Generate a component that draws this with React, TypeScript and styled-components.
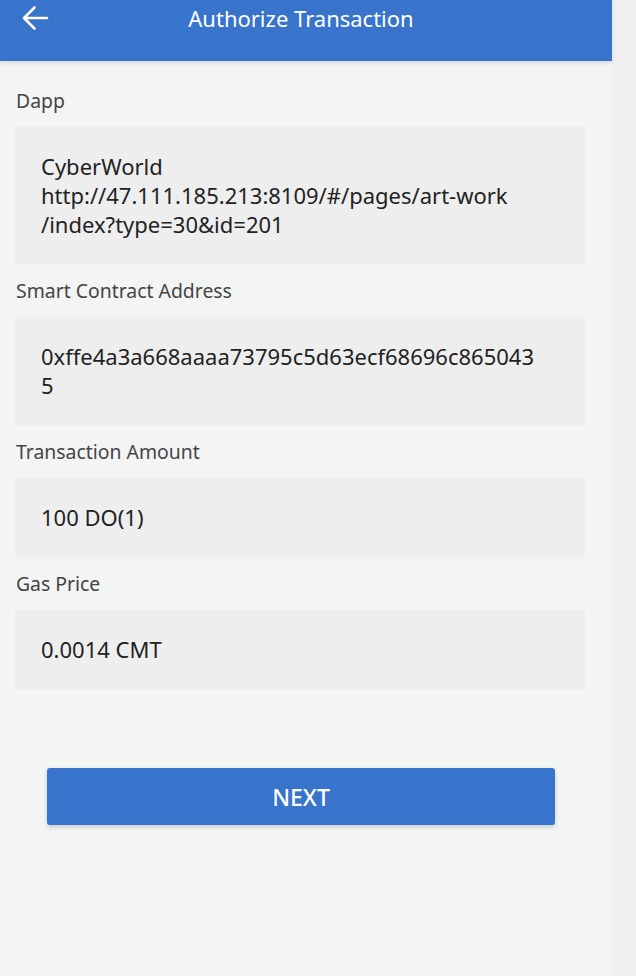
import React from "react";
import styled, { createGlobalStyle } from "styled-components";

const GlobalStyle = createGlobalStyle`
  html, body {
    margin: 0;
    padding: 0;
    background: #efefef;
  }
  * { box-sizing: border-box; }
`;

const Page = styled.div`
  width: 612px;
  min-height: 976px;
  background: #f3f4f4;
  display: flex;
  flex-direction: column;
  font-family: "Noto Sans", "Open Sans", sans-serif;
`;

const Header = styled.header`
  height: 61px;
  background: #3873cc;
  box-shadow: 0 2px 4px rgba(0, 0, 0, 0.12);
  display: flex;
  align-items: flex-start;
  padding: 0 32px 0 22px;
  position: relative;
  z-index: 1;
`;

const HeaderRow = styled.div`
  height: 36px;
  width: 100%;
  display: grid;
  grid-template-columns: 40px 1fr 40px;
  align-items: center;
`;

const BackButton = styled.button`
  border: none;
  background: transparent;
  padding: 0;
  display: flex;
  align-items: center;
  cursor: pointer;
`;

const Title = styled.h1`
  margin: 0;
  text-align: center;
  color: #ffffff;
  font-size: 22px;
  font-weight: 400;
  white-space: nowrap;
`;

const Content = styled.main`
  padding: 13px 27px 0 15px;
  display: flex;
  flex-direction: column;
`;

const Label = styled.div`
  height: 53px;
  display: flex;
  align-items: center;
  padding-left: 1px;
  font-size: 19.4px;
  color: #454545;
`;

const ValueBox = styled.div`
  background: #eeeeee;
  padding: 25px 26px;
  font-size: 22px;
  line-height: 29px;
  color: #222222;
  word-break: break-all;
`;

const Line = styled.div``;

const ButtonRow = styled.div`
  margin-top: 79px;
  padding: 0 30px 0 32px;
`;

const NextButton = styled.button`
  width: 100%;
  height: 57px;
  border: none;
  border-radius: 3px;
  background: #3873cc;
  color: #ffffff;
  font-family: "Noto Sans", "Open Sans", sans-serif;
  font-size: 23px;
  font-weight: 500;
  box-shadow: 0 2px 4px rgba(0, 0, 0, 0.18);
  cursor: pointer;
`;

const BackArrow = () => (
  <svg width="27" height="26" viewBox="0 0 27 26" fill="none">
    <path
      d="M25 13 H2 M12.5 2.5 L2 13 L12.5 23.5"
      stroke="#ffffff"
      strokeWidth="2.6"
      strokeLinecap="round"
      strokeLinejoin="round"
    />
  </svg>
);

const fields: { label: string; lines: string[] }[] = [
  {
    label: "Dapp",
    lines: [
      "CyberWorld",
      "http://47.111.185.213:8109/#/pages/art-work",
      "/index?type=30&id=201",
    ],
  },
  {
    label: "Smart Contract Address",
    lines: ["0xffe4a3a668aaaa73795c5d63ecf68696c865043", "5"],
  },
  { label: "Transaction Amount", lines: ["100 DO(1)"] },
  { label: "Gas Price", lines: ["0.0014 CMT"] },
];

export default function App() {
  return (
    <>
      <GlobalStyle />
      <Page>
        <Header>
          <HeaderRow>
            <BackButton aria-label="Back">
              <BackArrow />
            </BackButton>
            <Title>Authorize Transaction</Title>
            <span />
          </HeaderRow>
        </Header>
        <Content>
          {fields.map((f) => (
            <React.Fragment key={f.label}>
              <Label>{f.label}</Label>
              <ValueBox>
                {f.lines.map((l, i) => (
                  <Line key={i}>{l}</Line>
                ))}
              </ValueBox>
            </React.Fragment>
          ))}
          <ButtonRow>
            <NextButton>NEXT</NextButton>
          </ButtonRow>
        </Content>
      </Page>
    </>
  );
}
